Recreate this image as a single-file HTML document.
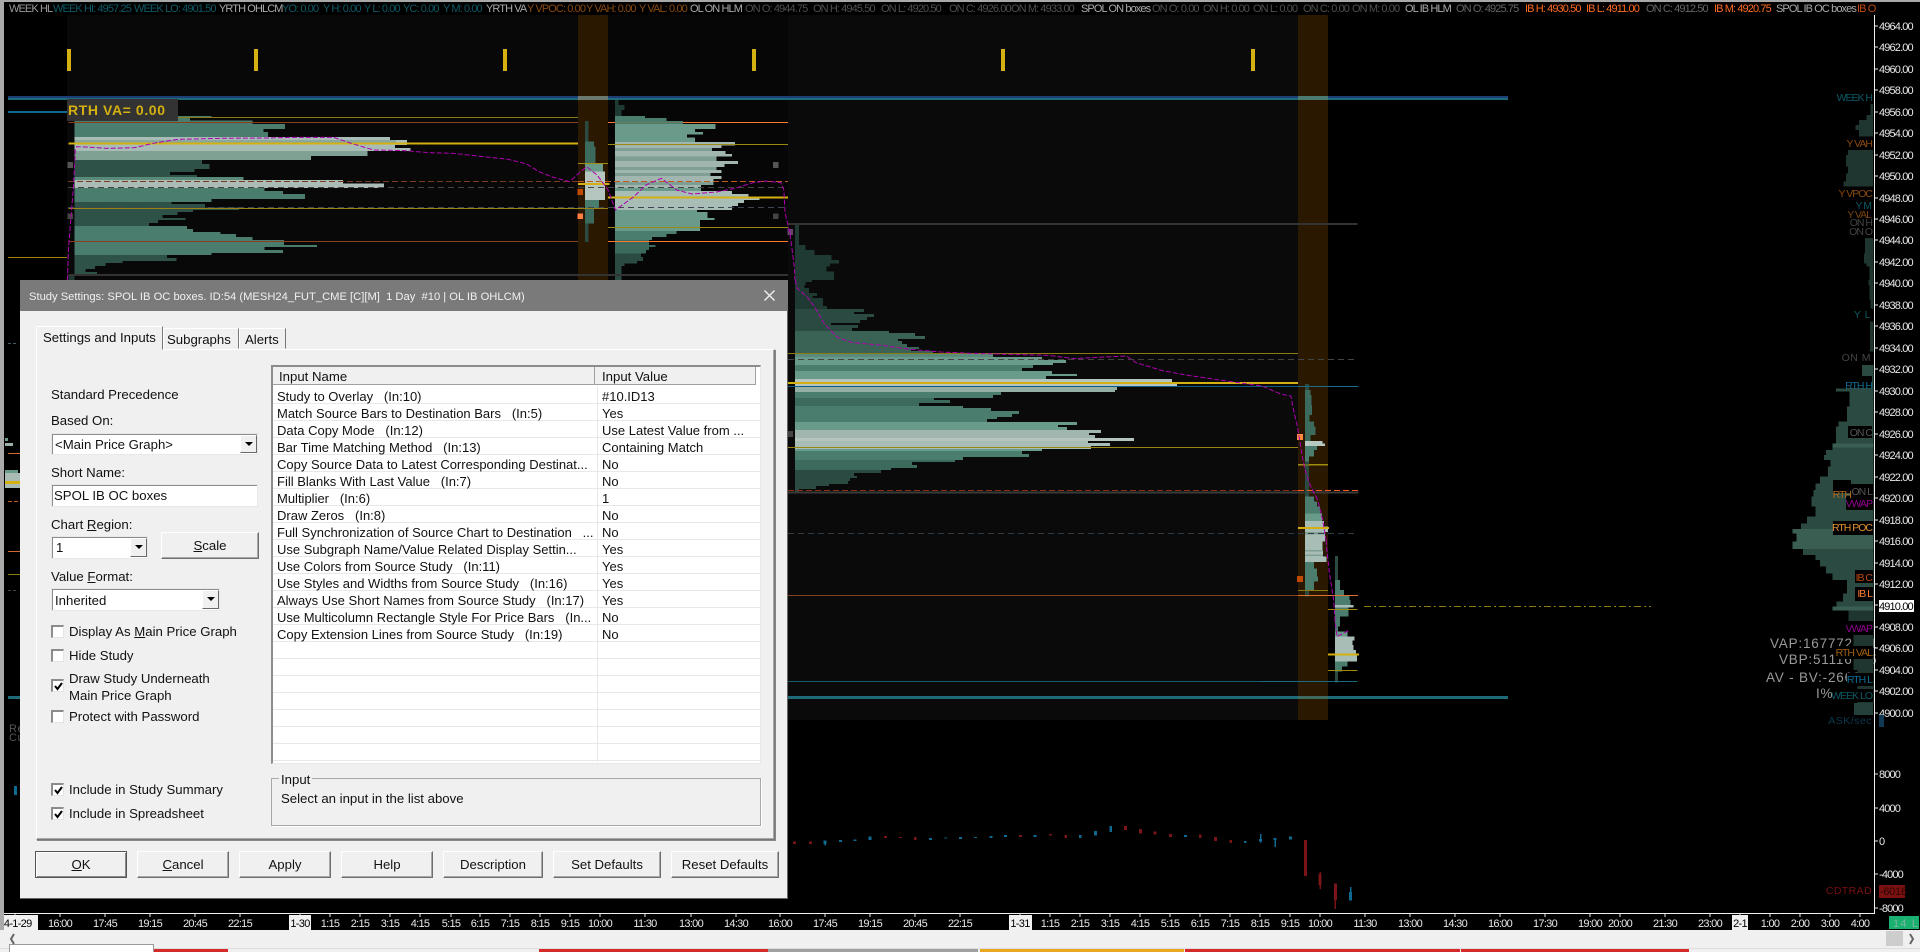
<!DOCTYPE html>
<html><head><meta charset="utf-8"><title>Study Settings</title>
<style>
html,body{margin:0;padding:0;background:#000;width:1920px;height:952px;overflow:hidden}
body{position:relative;font-family:"Liberation Sans",Arial,sans-serif;color:#111}
svg{position:absolute;left:0;top:0}
svg text{font-family:"Liberation Sans",Arial,sans-serif;font-size:11px;letter-spacing:-.5px}
.cr{shape-rendering:crispEdges}
.ax text{fill:#e8e8e8;letter-spacing:-.85px}
.tl text{fill:#e8e8e8;text-anchor:middle;letter-spacing:-.7px}
.lb text{text-anchor:end;font-size:10.5px;letter-spacing:-1px}
.hd text{letter-spacing:-.9px}
.a{position:absolute}
#dlg{position:absolute;left:20px;top:280px;width:768px;height:619px;background:#f0f0f0;box-shadow:inset -1px -1px #666}
.x{position:absolute;font-size:13.2px;line-height:16px;white-space:pre;color:#111;margin-top:1px}
.sunk{position:absolute;background:#fff;box-sizing:border-box;border-top:2px solid #8c8c8c;border-left:2px solid #8c8c8c;border-right:1px solid #fff;border-bottom:1px solid #fff;outline:1px solid #e8e8e8;outline-offset:-1px}
.dd{position:absolute;background:#f0f0f0;box-sizing:border-box;width:17px;border:1px solid;border-color:#fff #696969 #696969 #fff}
.dd:after{content:"";position:absolute;left:4px;top:6px;border:4px solid transparent;border-top:4px solid #000;border-bottom:0}
.btn{position:absolute;box-sizing:border-box;height:27px;top:851px;background:#f0f0f0;border:1px solid;border-color:#fff #6e6e6e #6e6e6e #fff;box-shadow:inset -1px -1px #a8a8a8;text-align:center;font-size:13.2px;line-height:25px;color:#111}
.ck{position:absolute;left:51px;width:13px;height:13px;box-sizing:border-box;background:#fff;border-top:2px solid #8c8c8c;border-left:2px solid #8c8c8c;border-right:1px solid #e4e4e4;border-bottom:1px solid #e4e4e4}
.ck svg{left:-1px;top:-1px}
u{text-decoration:underline}
</style></head>
<body>
<!-- chart -->
<svg width="1920" height="952" viewBox="0 0 1920 952">
<!-- backgrounds -->
<g class="cr">
<rect x="0" y="0" width="1920" height="952" fill="#000"/>
<rect x="67" y="15" width="511" height="705" fill="#080808"/>
<rect x="608" y="15" width="180" height="705" fill="#060606"/>
<rect x="788" y="15" width="510" height="705" fill="#0a0a0a"/>
<rect x="578" y="15" width="30" height="705" fill="#2a1800"/>
<rect x="1298" y="15" width="30" height="705" fill="#2a1800"/>
<!-- ticks -->
<g fill="#d4b010"><rect x="67" y="49" width="4" height="22"/><rect x="254" y="49" width="4" height="22"/><rect x="503" y="49" width="4" height="22"/><rect x="752" y="49" width="4" height="22"/><rect x="1001" y="49" width="4" height="22"/><rect x="1251" y="49" width="4" height="22"/></g>

<!-- zoom1 coordinate system -->
<g transform="scale(.6124,.3333)">
<path fill="#4a7d6e" d="M122 348H345V354H310V362H412V372H465V387H430V396H438V411H122z"/>
<path fill="#a8bdb5" d="M122 411H637V420H665V435H645V444H670V453H122z"/>
<rect x="122" y="420" width="525" height="9" fill="#8aa89e"/>
<path fill="#7fa194" d="M122 453H600V468H508V480H122z"/>
<path fill="#2f5248" d="M122 480H330V492H342V507H318V516H278V525H322V531H122z"/>
<path fill="#5a8a7a" d="M122 531H398V540H122z"/>
<path fill="#aabcb5" d="M122 540H560V550H627V564H122z"/>
<path fill="#4a7d6e" d="M122 564H432V573H462V582H498V597H345V606H122z"/>
<path fill="#2f5248" d="M122 606H280V612H335V622H390V630H315V636H290V645H265V654H303V660H258V669H243V678H122z"/>
<path fill="#4a7d6e" d="M122 678H305V687H315V696H360V702H385V711H412V720H464V735H518V741H432V750H462V759H345V765H122z"/>
<path fill="#2f5248" d="M122 765H273V774H288V783H200V789H172V798H155V807H140V816H158V825H122z"/>
<rect x="122" y="291" width="14" height="57" fill="#1f3a33"/>
<rect x="112" y="825" width="10" height="15" fill="#1f3a33"/>
<!-- band profile -->
<rect x="955" y="363" width="6" height="363" fill="#2a4a42"/>
<path fill="#3c6a5c" d="M955 425H970V440H972V490H955z"/>
<path fill="#6a9a8a" d="M955 490H985V515H955z"/>
<path fill="#b5c5bf" d="M955 515H988V600H955z"/>
<path fill="#4a7d6e" d="M955 600H978V625H955z"/>
<path fill="#3c6a5c" d="M955 625H970V670H955z"/>
<!-- profile 2 -->
<path fill="#1f3a33" d="M1004 292H1010V315H1020V330H1015V348H1004z"/>
<path fill="#4a7d6e" d="M1004 348H1053V354H1088V363H1115V372H1004z"/>
<path fill="#6a9a8a" d="M1004 372H1168V387H1135V396H1148V403H1122V412H1135V426H1004z"/>
<path fill="#a0b6ae" d="M1004 426H1200V436H1178V444H1163V453H1185V462H1195V470H1170V483H1205V492H1183V501H1170V510H1178V519H1160V528H1178V537H1165V555H1145V564H1004z"/>
<g fill="#7f9f94"><rect x="1004" y="444" width="159" height="9"/><rect x="1004" y="470" width="166" height="13"/><rect x="1004" y="501" width="166" height="9"/><rect x="1004" y="519" width="156" height="9"/><rect x="1004" y="546" width="161" height="9"/></g>
<path fill="#6a9a8a" d="M1004 564H1145V573H1004z"/>
<path fill="#a8bdb5" d="M1004 573H1195V582H1222V591H1240V600H1215V609H1205V618H1195V630H1004z"/>
<path fill="#6a9a8a" d="M1004 630H1138V636H1155V654H1167V660H1143V693H1004z"/>
<path fill="#4a7d6e" d="M1004 693H1105V702H1088V711H1065V720H1004z"/>
<path fill="#3c6a5c" d="M1004 720H1060V735H1070V741H1060V750H1055V760H1004z"/>
<path fill="#2a4a42" d="M1004 760H1047V771H1050V783H1040V790H1020V798H1015V840H1004z"/>
<!-- profile 3 top -->
<path fill="#1f3a33" d="M1298 672H1305V735H1315V750H1330V765H1358V780H1370V790H1355V800H1350V815H1362V840H1298z"/>
<!-- horizontal lines -->
<rect x="290" y="351" width="654" height="3" fill="#8a7a10"/>
<rect x="112" y="366" width="832" height="3" fill="#8a4020"/>
<rect x="993" y="366" width="294" height="3" fill="#ff7a30"/>
<rect x="1004" y="366" width="111" height="3" fill="#6a7a60"/>
<rect x="112" y="428" width="832" height="6" fill="#d4b010"/>
<rect x="993" y="432" width="294" height="3" fill="#9a8a14"/>
<rect x="944" y="489" width="49" height="3" fill="#a08c10"/>
<rect x="944" y="549" width="51" height="6" fill="#d4b010"/>
<rect x="993" y="590" width="294" height="6" fill="#d4b010"/>
<rect x="112" y="624" width="881" height="3" fill="#9a8414"/>
<rect x="993" y="681" width="294" height="3" fill="#9a8a14"/>
<rect x="112" y="723" width="832" height="3" fill="#8a4020"/>
<rect x="993" y="723" width="294" height="3" fill="#ff7a30"/>
<rect x="112" y="822" width="1175" height="6" fill="#333"/>
<rect x="1287" y="669" width="930" height="6" fill="#333"/>
<!-- small squares -->
<rect x="110" y="486" width="9" height="18" fill="#555"/><rect x="110" y="640" width="9" height="17" fill="#444"/>
<rect x="1262" y="486" width="9" height="18" fill="#555"/><rect x="1262" y="640" width="9" height="17" fill="#444"/>
<rect x="1286" y="687" width="9" height="18" fill="#6a406a"/>
<rect x="943" y="567" width="9" height="18" fill="#c04a00"/><rect x="943" y="640" width="9" height="17" fill="#ff8040"/>
</g>

<!-- zoom6 coordinate system -->
<g transform="translate(780,280) scale(.3827,.3333)">
<path fill="#1f3a33" d="M39 0H84V6H66V15H64V24H76V39H97V48H85V54H112V78H123V87H39z"/>
<path fill="#2a4a42" d="M39 87H220V96H193V102H246V111H227V120H209V129H133V135H204V144H188V153H39z"/>
<path fill="#3a6356" d="M39 153H285V159H353V168H379V177H308V183H319V192H332V201H363V207H342V213H400V219H39z"/>
<path fill="#5a8a7a" d="M39 219H557V231H39z"/>
<path fill="#6a9a8a" d="M39 231H685V240H747V249H713V255H39z"/>
<path fill="#4a7d6e" d="M39 255H661V264H632V273H39z"/>
<path fill="#6a9a8a" d="M39 273H711V282H776V288H695V297H39z"/>
<path fill="#b5c5bf" d="M39 297H1024V306H1130V312H1037V321H39z"/>
<path fill="#95aea6" d="M39 321H881V330H875V336H39z"/>
<path fill="#4a7d6e" d="M39 336H578V345H557V354H39z"/>
<path fill="#3c6a5c" d="M39 354H402V360H444V369H363V378H39z"/>
<path fill="#4a7d6e" d="M39 378H478V384H551V393H625V402H606V411H567V417H541V426H39z"/>
<path fill="#6a9a8a" d="M39 426H776V435H727V441H750V450H39z"/>
<path fill="#a0b6ae" d="M39 450H839V459H808V465H823V474H39z"/>
<path fill="#b5c5bf" d="M39 474H925V483H39z"/>
<path fill="#a8bdb5" d="M39 483H805V489H862V498H813V507H39z"/>
<path fill="#6a9a8a" d="M39 507H685V513H39z"/>
<path fill="#4a7d6e" d="M39 513H632V522H651V531H478V540H39z"/>
<path fill="#3c6a5c" d="M39 540H457V546H345V555H358V564H290V570H39z"/>
<path fill="#2a4a42" d="M39 570H264V579H193V588H201V594H183V603H178V612H128V618H94V627H50V636H39z"/>
<!-- lines -->
<rect x="21" y="219" width="1333" height="3" fill="#8a7a10"/>
<rect x="21" y="306" width="1333" height="6" fill="#d4b010"/>
<rect x="21" y="318" width="1490" height="3" fill="#0e5a7a"/>
<rect x="21" y="501" width="1333" height="3" fill="#9a8414"/>
<rect x="1354" y="552" width="78" height="3" fill="#a08c10"/>
<rect x="21" y="635" width="1490" height="6" fill="#3a3a3a"/>
<rect x="1354" y="741" width="81" height="6" fill="#d4b010"/>
<rect x="21" y="453" width="13" height="18" fill="#444"/>
<rect x="1351" y="462" width="16" height="18" fill="#ff8a40"/>
</g>

<!-- zoom7 coordinate system -->
<g transform="translate(1260,360) scale(.4209,.3333)">
<rect x="107" y="72" width="9" height="638" fill="#2a4a42"/>
<path fill="#3c6a5c" d="M107 90H120V105H122V135H124V165H118V185H128V200H132V225H120V243H107z"/>
<path fill="#b8c8c2" d="M107 243H148V250H154V258H107z"/>
<path fill="#4a7d6e" d="M107 258H135V270H128V290H117V305H107z"/>
<path fill="#4a7d6e" d="M107 410H128V425H135V440H143V460H107z"/>
<path fill="#6a9a8a" d="M107 460H147V483H107z"/>
<path fill="#a8bdb5" d="M107 483H152V500H162V516H155V545H148V570H150V590H158V606H107z"/>
<g fill="#7f9f94"><rect x="107" y="516" width="48" height="8"/><rect x="107" y="570" width="43" height="5"/><rect x="107" y="583" width="43" height="5"/></g>
<path fill="#4a7d6e" d="M107 606H128V625H135V650H138V665H128V690H107z"/>
<rect x="178" y="588" width="7" height="380" fill="#2a4a42"/>
<path fill="#4a7d6e" d="M178 660H190V690H200V705H213V720H215V735H178z"/>
<path fill="#a8bdb5" d="M178 735H222V742H178z"/>
<path fill="#4a7d6e" d="M178 742H210V770H190V800H185V815H178z"/>
<path fill="#6a9a8a" d="M178 815H208V830H178z"/>
<path fill="#a8bdb5" d="M178 830H225V842H220V855H222V870H228V885H230V905H178z"/>
<path fill="#4a7d6e" d="M178 905H208V920H195V935H178z"/>
<rect x="0" y="261" width="90" height="3" fill="#9a8414"/>
<rect x="90" y="78" width="143" height="3" fill="#1a6a88"/>
<rect x="90" y="313" width="72" height="3" fill="#a08c10"/>
<rect x="90" y="501" width="73" height="6" fill="#d4b010"/>
<rect x="90" y="690" width="72" height="3" fill="#8a7a10"/>
<rect x="0" y="705" width="90" height="3" fill="#8a4020"/>
<rect x="90" y="705" width="143" height="3" fill="#e07030"/>
<rect x="162" y="747" width="70" height="3" fill="#a08c10"/>
<rect x="162" y="880" width="73" height="6" fill="#d4b010"/>
<rect x="162" y="930" width="70" height="3" fill="#a08c10"/>
<rect x="0" y="963" width="232" height="3" fill="#1a6a80"/>
<rect x="88" y="648" width="14" height="18" fill="#c04a00"/>
</g>

<!-- lines that span the middle session -->
<rect x="788" y="595" width="472" height="1" fill="#8a4020"/>
<rect x="788" y="681" width="472" height="1" fill="#155a6c"/>

<!-- week hi/lo lines -->
<rect x="8" y="96" width="1500" height="2" fill="#1c3f78"/>
<rect x="8" y="98" width="1500" height="2" fill="#1f6a78"/>
<rect x="578" y="96" width="30" height="4" fill="#6a7a70"/>
<rect x="1298" y="96" width="30" height="4" fill="#4a7a70"/>
<rect x="788" y="696" width="720" height="3" fill="#1f6a78"/>
<rect x="1298" y="696" width="30" height="3" fill="#3f6a60"/>
<rect x="8" y="111" width="59" height="2" fill="#0e6a8c"/>
<rect x="8" y="257" width="59" height="1" fill="#a08010"/>
</g>

<!-- dashed lines -->
<g fill="none" stroke-width="1">
<path d="M68 181.500H578" stroke="#7a3a20" stroke-dasharray="6 3"/>
<path d="M578 181.500H788" stroke="#c05a20" stroke-dasharray="6 3"/>
<path d="M68 187.500H788" stroke="#444" stroke-dasharray="6 4"/>
<path d="M68 207.500H788" stroke="#3d4650" stroke-dasharray="6 4"/>
<path d="M788 359.500H1358" stroke="#444" stroke-dasharray="6 4"/>
<path d="M788 490.500H1298" stroke="#8a3010" stroke-dasharray="6 3"/>
<path d="M1298 490.500H1358" stroke="#ff5a20" stroke-dasharray="6 3"/>
<path d="M788 533.500H1358" stroke="#2d3b47" stroke-dasharray="6 4"/>
<path d="M1364 606.500H1651" stroke="#8a7a10" stroke-dasharray="7 3 2 3"/>
</g>

<!-- VWAP -->
<g fill="none" stroke="#b000b0" stroke-width="1" stroke-dasharray="5 2">
<polyline vector-effect="non-scaling-stroke" transform="scale(.6124,.3333)" points="110,840 112,740 120,560 123,450 125,440 150,442 175,445 220,443 250,430 290,418 360,415 440,414 480,412 545,412 570,428 610,450 660,452 700,458 740,460 790,470 830,478 860,492 880,515 900,530 930,545 945,520 958,500 975,525 985,550 993,570 1005,630 1035,590 1055,555 1080,535 1105,570 1130,582 1170,576 1200,565 1230,548 1250,543 1275,548 1280,570 1282,640 1290,700 1297,800 1298,840"/>
<polyline vector-effect="non-scaling-stroke" transform="translate(780,280) scale(.3827,.3333)" points="40,0 45,25 70,50 90,80 115,130 150,172 190,188 260,195 340,208 420,216 500,220 600,223 700,226 770,236 830,232 905,228 930,248 1000,272 1060,285 1160,302 1260,318 1310,343 1335,348 1340,380 1352,440 1358,480 1365,530 1372,570 1385,615 1405,660 1418,720 1427,780"/>
<polyline vector-effect="non-scaling-stroke" transform="translate(1260,360) scale(.4209,.3333)" points="157,540 158,560 165,640 175,720 178,780 183,830 213,810"/>
</g>

<!-- RTH VA -->
<rect x="67" y="99" width="111" height="22" fill="#333" class="cr"/>
<text x="68" y="115" style="font-size:14px;font-weight:bold;letter-spacing:.6px" fill="#d4b010">RTH VA= 0.00</text>

<!-- header -->
<g class="hd">
<text x="9" y="12" fill="#999">WEEK HL</text>
<text x="53" y="12" fill="#0d5a66">WEEK HI: 4957.25</text>
<text x="134" y="12" fill="#0d5a66">WEEK LO: 4901.50</text>
<text x="219" y="12" fill="#aaa">YRTH OHLCM</text>
<text x="282" y="12" fill="#0d5a66">YO: 0.00</text>
<text x="323" y="12" fill="#0d5a66">Y H: 0.00</text>
<text x="364" y="12" fill="#0d5a66">Y L: 0.00</text>
<text x="403" y="12" fill="#0d5a66">YC: 0.00</text>
<text x="443" y="12" fill="#0d5a66">Y M: 0.00</text>
<text x="486" y="12" fill="#aaa">YRTH VA</text>
<text x="527" y="12" fill="#8a4a10">Y VPOC: 0.00</text>
<text x="586" y="12" fill="#8a4a10">Y VAH: 0.00</text>
<text x="639" y="12" fill="#8a4a10">Y VAL: 0.00</text>
<text x="690" y="12" fill="#aaa">OL ON HLM</text>
<text x="745" y="12" fill="#505050">ON O: 4944.75</text>
<text x="813" y="12" fill="#505050">ON H: 4945.50</text>
<text x="881" y="12" fill="#505050">ON L: 4920.50</text>
<text x="949" y="12" fill="#505050">ON C: 4926.00</text>
<text x="1011" y="12" fill="#505050">ON M: 4933.00</text>
<text x="1081" y="12" fill="#aaa">SPOL ON boxes</text>
<text x="1152" y="12" fill="#505050">ON O: 0.00</text>
<text x="1203" y="12" fill="#505050">ON H: 0.00</text>
<text x="1253" y="12" fill="#505050">ON L: 0.00</text>
<text x="1303" y="12" fill="#505050">ON C: 0.00</text>
<text x="1352" y="12" fill="#505050">ON M: 0.00</text>
<text x="1405" y="12" fill="#aaa">OL IB HLM</text>
<text x="1456" y="12" fill="#666">ON O: 4925.75</text>
<text x="1525" y="12" fill="#ff6a20">IB H: 4930.50</text>
<text x="1586" y="12" fill="#ff6a20">IB L: 4911.00</text>
<text x="1646" y="12" fill="#666">ON C: 4912.50</text>
<text x="1714" y="12" fill="#ff6a20">IB M: 4920.75</text>
<text x="1776" y="12" fill="#aaa">SPOL IB OC boxes</text>
<text x="1857" y="12" fill="#c04a10">IB O</text>
</g>

<!-- stats under composite -->
<g fill="#9a9a9a">
<text x="1770" y="648" style="font-size:13.500px;letter-spacing:.8px">VAP:167772601</text>
<text x="1779" y="664" style="font-size:13.500px;letter-spacing:.8px">VBP:51116745</text>
<text x="1766" y="682" style="font-size:13.500px;letter-spacing:.8px">AV - BV:-26607</text>
<text x="1816" y="698" style="font-size:13.500px;letter-spacing:.8px">I%</text>
</g>

<!-- composite profile -->
<g class="cr">
<g transform="translate(960,0) scale(.6124,.3333)" fill="#1f3530">
<path d="M1491 312H1487V345H1480V360H1468V375H1462V390H1468V410H1491z"/>
<path d="M1491 450H1450V465H1447V500H1450V520H1447V545H1443V560H1491z"/>
<path d="M1491 600H1450V612H1458V625H1491z"/>
<path d="M1491 714H1478V740H1480V800H1486V840H1491z"/>
</g>
<g transform="translate(1780,240) scale(.3333)" fill="#1f3530">
<path d="M280 0H255V40H252V70H268V120H265V135H268V180H272V205H280z"/>
<path d="M280 245H270V330H268V335H280z"/>
<path d="M280 375H247V390H280z"/>
</g>
<g transform="translate(1260,360) scale(.4209,.3333)">
<path fill="#2a4a42" d="M1457 15H1430V50H1395V85H1368V95H1400V140H1395V185H1375V200H1368V250H1457z"/>
<path fill="#3a5f52" d="M1457 250H1360V262H1457z"/>
<path fill="#2a4a42" d="M1457 262H1360V270H1345V285H1340V300H1355V320H1350V350H1330V370H1320V390H1315V410H1310V440H1320V470H1300V490H1285V507H1457z"/>
<path fill="#3a5f52" d="M1457 507H1265V520H1275V545H1265V567H1457z"/>
<path fill="#2a4a42" d="M1457 567H1290V585H1320V600H1330V620H1345V640H1360V660H1395V700H1385V725H1370V740H1457z"/>
<path fill="#3a5f52" d="M1457 740H1360V752H1457z"/>
<path fill="#1f3530" d="M1457 752H1398V785H1405V820H1410V930H1420V1030H1457z"/>
</g>
<rect x="1854" y="703" width="19" height="12" fill="#24403a"/>
</g>

<!-- labels with black bg -->
<g class="cr" fill="#000">
<rect x="1845" y="91" width="29" height="11"/><rect x="1845" y="137" width="29" height="11"/><rect x="1845" y="188" width="29" height="22"/><rect x="1845" y="214" width="29" height="22"/>
<rect x="1845" y="376" width="27" height="12"/><rect x="1848" y="426" width="24" height="12"/><rect x="1833" y="480" width="18" height="13"/><rect x="1851" y="484" width="22" height="12"/><rect x="1846" y="496" width="27" height="14"/><rect x="1833" y="521" width="40" height="14"/><rect x="1855" y="570" width="18" height="13"/><rect x="1855" y="587" width="18" height="14"/><rect x="1846" y="621" width="27" height="14"/><rect x="1835" y="646" width="38" height="13"/><rect x="1847" y="673" width="26" height="13"/><rect x="1832" y="689" width="41" height="13"/>
</g>
<g class="lb">
<text x="1872" y="101" fill="#0d5a66">WEEK H</text>
<text x="1872" y="147" fill="#8a4a10">Y VAH</text>
<text x="1872" y="197" fill="#8a4a10">Y VPOC</text>
<text x="1871" y="209" fill="#0d5a66">Y M</text>
<text x="1871" y="218" fill="#7a4410">Y VAL</text>
<text x="1872" y="226" fill="#444">ON H</text>
<text x="1872" y="235" fill="#444">ON O</text>
<text x="1871" y="318" fill="#0d5a66" style="letter-spacing:.5px">Y L</text>
<text x="1871" y="361" fill="#444" style="letter-spacing:.5px">ON M</text>
<text x="1872" y="389" fill="#0e6a90">RTH H</text>
<text x="1872" y="436" fill="#555">ON C</text>
<text x="1851" y="498" fill="#b06a20">RTH</text>
<text x="1872" y="495" fill="#555">ON L</text>
<text x="1872" y="507" fill="#900090">VWAP</text>
<text x="1872" y="531" fill="#e09030">RTH POC</text>
<text x="1872" y="581" fill="#c04a10">IB C</text>
<text x="1872" y="597" fill="#ff7a30">IB L</text>
<text x="1872" y="632" fill="#900090">VWAP</text>
<text x="1872" y="656" fill="#a06010">RTH VAL</text>
<text x="1872" y="683" fill="#0e6a90">RTH L</text>
<text x="1872" y="699" fill="#0d5a66">WEEK LO</text>
<text x="1872" y="724" fill="#0d3a50" style="letter-spacing:.5px">ASK/sec</text>
<text x="1872" y="894" fill="#7a1010" style="letter-spacing:.4px">CDTRAD</text>
</g>

<!-- candles -->
<g class="cr" transform="translate(780,780) scale(.727,.3333)">
<g fill="#7a1418">
<rect x="18" y="184" width="4" height="8"/><rect x="40" y="184" width="4" height="8"/><rect x="143" y="168" width="4" height="6"/><rect x="164" y="171" width="4" height="3"/><rect x="184" y="171" width="4" height="9"/><rect x="329" y="165" width="4" height="6"/><rect x="370" y="162" width="4" height="5"/><rect x="391" y="165" width="4" height="9"/><rect x="473" y="138" width="4" height="12"/><rect x="494" y="147" width="4" height="13"/><rect x="514" y="155" width="4" height="9"/><rect x="535" y="162" width="4" height="9"/><rect x="576" y="163" width="4" height="11"/><rect x="597" y="171" width="4" height="12"/><rect x="618" y="180" width="4" height="9"/>
<rect x="721" y="180" width="4" height="108"/><rect x="741" y="282" width="4" height="33"/><rect x="762" y="310" width="4" height="50"/>
<rect x="742" y="276" width="2" height="51"/><rect x="763" y="360" width="2" height="27"/>
</g>
<g fill="#0e6a90">
<rect x="60" y="182" width="4" height="10"/><rect x="61" y="192" width="2" height="4"/><rect x="81" y="180" width="4" height="6"/><rect x="101" y="178" width="4" height="5"/><rect x="122" y="170" width="4" height="10"/><rect x="205" y="174" width="4" height="6"/><rect x="226" y="172" width="4" height="4"/><rect x="246" y="171" width="4" height="6"/><rect x="267" y="171" width="4" height="3"/><rect x="288" y="168" width="4" height="6"/><rect x="308" y="165" width="4" height="6"/><rect x="349" y="165" width="4" height="6"/><rect x="411" y="165" width="4" height="9"/><rect x="432" y="153" width="4" height="14"/><rect x="453" y="138" width="4" height="18"/><rect x="556" y="165" width="4" height="6"/><rect x="638" y="183" width="4" height="6"/><rect x="659" y="177" width="4" height="8"/><rect x="660" y="162" width="2" height="25"/><rect x="679" y="174" width="4" height="6"/><rect x="680" y="180" width="2" height="21"/><rect x="700" y="170" width="4" height="9"/><rect x="783" y="336" width="4" height="26"/><rect x="784" y="321" width="2" height="15"/>
</g>
</g>
<rect class="cr" x="14" y="786" width="3" height="9" fill="#0e6a90"/>

<!-- left edge remnants -->
<g class="cr">
<rect x="8" y="343" width="3" height="1" fill="#4a5a60"/><rect x="13" y="343" width="3" height="1" fill="#4a5a60"/>
<rect x="5" y="438" width="3" height="3" fill="#6a9a8a"/><rect x="5" y="443" width="8" height="3" fill="#9ab0a8"/>
<rect x="8" y="453" width="12" height="1" fill="#d06a30"/>
<rect x="5" y="470" width="13" height="3" fill="#6a9a8a"/><rect x="5" y="473" width="15" height="8" fill="#aabbb4"/><rect x="5" y="481" width="15" height="3" fill="#d4b010"/><rect x="5" y="484" width="15" height="4" fill="#aabbb4"/>
<rect x="8" y="501" width="4" height="1" fill="#c05a20"/><rect x="14" y="501" width="4" height="1" fill="#c05a20"/>
<rect x="8" y="551" width="12" height="1" fill="#d06a30"/>
<rect x="8" y="574" width="12" height="1" fill="#8a7a10"/>
<rect x="8" y="590" width="3" height="1" fill="#444"/><rect x="13" y="590" width="3" height="1" fill="#444"/>
<rect x="8" y="696" width="12" height="3" fill="#1f6a78"/>
</g>
<text x="9" y="732" fill="#555" style="font-size:11px;letter-spacing:.6px">Re</text>
<text x="9" y="741" fill="#555" style="font-size:11px;letter-spacing:.6px">Cu</text>

<!-- price axis -->
<rect class="cr" x="1874" y="15" width="1" height="899" fill="#f0f0f0"/>
<path class="cr" stroke="#e8e8e8" fill="none" d="M1875 26h3M1875 47h3M1875 69h3M1875 90h3M1875 112h3M1875 133h3M1875 155h3M1875 176h3M1875 198h3M1875 219h3M1875 240h3M1875 262h3M1875 283h3M1875 305h3M1875 326h3M1875 348h3M1875 369h3M1875 391h3M1875 412h3M1875 434h3M1875 455h3M1875 477h3M1875 498h3M1875 520h3M1875 541h3M1875 563h3M1875 584h3M1875 605h3M1875 627h3M1875 648h3M1875 670h3M1875 691h3M1875 713h3M1875 774h3M1875 808h3M1875 841h3M1875 874h3M1875 908h3"/>
<g class="ax">
<text x="1879" y="30">4964.00</text><text x="1879" y="51">4962.00</text><text x="1879" y="73">4960.00</text><text x="1879" y="94">4958.00</text><text x="1879" y="116">4956.00</text><text x="1879" y="137">4954.00</text><text x="1879" y="159">4952.00</text><text x="1879" y="180">4950.00</text><text x="1879" y="202">4948.00</text><text x="1879" y="223">4946.00</text><text x="1879" y="244">4944.00</text><text x="1879" y="266">4942.00</text><text x="1879" y="287">4940.00</text><text x="1879" y="309">4938.00</text><text x="1879" y="330">4936.00</text><text x="1879" y="352">4934.00</text><text x="1879" y="373">4932.00</text><text x="1879" y="395">4930.00</text><text x="1879" y="416">4928.00</text><text x="1879" y="438">4926.00</text><text x="1879" y="459">4924.00</text><text x="1879" y="481">4922.00</text><text x="1879" y="502">4920.00</text><text x="1879" y="524">4918.00</text><text x="1879" y="545">4916.00</text><text x="1879" y="567">4914.00</text><text x="1879" y="588">4912.00</text>
<rect x="1879" y="600" width="35" height="12" fill="#fff"/>
<text x="1879" y="610" style="fill:#000">4910.00</text>
<text x="1879" y="631">4908.00</text><text x="1879" y="652">4906.00</text><text x="1879" y="674">4904.00</text><text x="1879" y="695">4902.00</text><text x="1879" y="717">4900.00</text>
<text x="1879" y="778">8000</text><text x="1879" y="812">4000</text><text x="1879" y="845">0</text><text x="1879" y="878">-4000</text><text x="1879" y="912">-8000</text>
</g>
<rect class="cr" x="1879" y="715" width="5" height="12" fill="#0e3a55"/>
<rect class="cr" x="1879" y="885" width="26" height="13" fill="#7a1010"/>
<text x="1880" y="895" fill="#2a0505" style="letter-spacing:-.3px">-6016</text>

<!-- timeline -->
<rect class="cr" x="0" y="913" width="1875" height="1" fill="#f0f0f0"/>
<path class="cr" stroke="#e8e8e8" fill="none" d="M15 914v3M60 914v3M105 914v3M150 914v3M195 914v3M240 914v3M300 914v3M330 914v3M360 914v3M390 914v3M420 914v3M451 914v3M480 914v3M510 914v3M540 914v3M570 914v3M600 914v3M645 914v3M691 914v3M736 914v3M780 914v3M825 914v3M870 914v3M915 914v3M960 914v3M1020 914v3M1050 914v3M1080 914v3M1110 914v3M1140 914v3M1170 914v3M1200 914v3M1230 914v3M1260 914v3M1290 914v3M1320 914v3M1365 914v3M1410 914v3M1455 914v3M1500 914v3M1545 914v3M1590 914v3M1620 914v3M1665 914v3M1710 914v3M1740 914v3M1770 914v3M1800 914v3M1830 914v3M1860 914v3"/>
<rect class="cr" x="0" y="915" width="38" height="15" fill="#f0f0f0"/>
<rect class="cr" x="289" y="915" width="22" height="15" fill="#f0f0f0"/>
<rect class="cr" x="1009" y="915" width="23" height="15" fill="#f0f0f0"/>
<rect class="cr" x="1732" y="915" width="16" height="15" fill="#f0f0f0"/>
<g class="tl">
<text x="15" y="927" style="fill:#000">24-1-29</text><text x="60" y="927">16:00</text><text x="105" y="927">17:45</text><text x="150" y="927">19:15</text><text x="195" y="927">20:45</text><text x="240" y="927">22:15</text>
<text x="300" y="927" style="fill:#000">1-30</text>
<text x="330" y="927">1:15</text><text x="360" y="927">2:15</text><text x="390" y="927">3:15</text><text x="420" y="927">4:15</text><text x="451" y="927">5:15</text><text x="480" y="927">6:15</text><text x="510" y="927">7:15</text><text x="540" y="927">8:15</text><text x="570" y="927">9:15</text><text x="600" y="927">10:00</text><text x="645" y="927">11:30</text><text x="691" y="927">13:00</text><text x="736" y="927">14:30</text><text x="780" y="927">16:00</text><text x="825" y="927">17:45</text><text x="870" y="927">19:15</text><text x="915" y="927">20:45</text><text x="960" y="927">22:15</text>
<text x="1020" y="927" style="fill:#000">1-31</text>
<text x="1050" y="927">1:15</text><text x="1080" y="927">2:15</text><text x="1110" y="927">3:15</text><text x="1140" y="927">4:15</text><text x="1170" y="927">5:15</text><text x="1200" y="927">6:15</text><text x="1230" y="927">7:15</text><text x="1260" y="927">8:15</text><text x="1290" y="927">9:15</text><text x="1320" y="927">10:00</text><text x="1365" y="927">11:30</text><text x="1410" y="927">13:00</text><text x="1455" y="927">14:30</text><text x="1500" y="927">16:00</text><text x="1545" y="927">17:30</text><text x="1590" y="927">19:00</text><text x="1620" y="927">20:00</text><text x="1665" y="927">21:30</text><text x="1710" y="927">23:00</text>
<text x="1740" y="927" style="fill:#000">2-1</text>
<text x="1770" y="927">1:00</text><text x="1800" y="927">2:00</text><text x="1830" y="927">3:00</text><text x="1860" y="927">4:00</text>
</g>
<rect class="cr" x="1889" y="916" width="30" height="13" fill="#1ab070"/>
<text x="1893" y="927" fill="#7ab8a0" style="letter-spacing:1.2px">14 LE</text>

<!-- frame, scrollbar, tabs -->
<g class="cr">
<rect x="0" y="0" width="1920" height="2" fill="#a8a8a8"/>
<rect x="0" y="0" width="4" height="930" fill="#aaa"/>
<rect x="0" y="930" width="1920" height="18" fill="#f0f0f0"/>
<rect x="1000" y="948" width="920" height="1" fill="#ddd"/>
<rect x="0" y="948" width="1000" height="1" fill="#ddd"/>
<rect x="1886" y="931" width="17" height="15" fill="#cdcdcd"/>
<rect x="0" y="949" width="1920" height="3" fill="#f0f0f0"/>
<rect x="154" y="949" width="74" height="3" fill="#d42a2a"/>
<rect x="539" y="949" width="229" height="3" fill="#d42a2a"/>
<rect x="768" y="949" width="210" height="3" fill="#a0a0a0"/>
<rect x="980" y="949" width="204" height="3" fill="#eaa820"/>
<rect x="1185" y="949" width="275" height="3" fill="#d42a2a"/>
<rect x="1461" y="949" width="228" height="3" fill="#d42a2a"/>
<rect x="9" y="944" width="145" height="8" fill="#9a9a9a"/>
<rect x="10" y="945" width="143" height="7" fill="#fff"/>
</g>
<path d="M14 934l-3 5 3 5" fill="none" stroke="#666" stroke-width="2"/>
<path d="M1910 934l3 5-3 5" fill="none" stroke="#666" stroke-width="2"/>
</svg>

<!-- dialog -->
<div id="dlg" style="left:20px"></div>
<div class="a" style="left:20px;top:280px;width:768px;height:31px;background:#7a7a7a"></div>
<div class="x" style="left:29px;top:288px;font-size:11.2px;color:#f0f0f0">Study Settings: SPOL IB OC boxes. ID:54 (MESH24_FUT_CME [C][M]  1 Day  #10 | OL IB OHLCM)</div>
<svg width="14" height="14" style="left:763px;top:289px"><path d="M1.500 1.500L11.500 11.500M11.500 1.500L1.500 11.500" stroke="#f0f0f0" stroke-width="1.400" fill="none"/></svg>

<!-- tabs and page -->
<div class="a" style="left:36px;top:349px;width:739px;height:491px;box-sizing:border-box;border:1px solid;border-color:#fff #777 #777 #fff;box-shadow:inset -1px -1px #a8a8a8,1px 1px 0 #888"></div>
<div class="a" style="left:36px;top:326px;width:127px;height:24px;background:#f0f0f0;box-sizing:border-box;border:1px solid;border-color:#fff #777 #f0f0f0 #fff"></div>
<div class="a" style="left:163px;top:328px;width:76px;height:21px;background:#f0f0f0;box-sizing:border-box;border:1px solid;border-color:#fff #777 transparent #fff"></div>
<div class="a" style="left:239px;top:328px;width:47px;height:21px;background:#f0f0f0;box-sizing:border-box;border:1px solid;border-color:#fff #777 transparent #fff"></div>
<div class="x" style="left:43px;top:329px">Settings and Inputs</div>
<div class="x" style="left:167px;top:331px">Subgraphs</div>
<div class="x" style="left:245px;top:331px">Alerts</div>

<!-- left controls -->
<div class="x" style="left:51px;top:386px">Standard Precedence</div>
<div class="x" style="left:51px;top:412px">Based On:</div>
<div class="sunk" style="left:51px;top:433px;width:207px;height:22px"></div>
<div class="dd" style="left:240px;top:435px;height:18px"></div>
<div class="x" style="left:55px;top:436px">&lt;Main Price Graph&gt;</div>
<div class="x" style="left:51px;top:464px">Short Name:</div>
<div class="sunk" style="left:51px;top:484px;width:207px;height:23px"></div>
<div class="x" style="left:54px;top:487px">SPOL IB OC boxes</div>
<div class="x" style="left:51px;top:516px">Chart <u>R</u>egion:</div>
<div class="sunk" style="left:51px;top:536px;width:97px;height:23px"></div>
<div class="dd" style="left:130px;top:538px;height:19px"></div>
<div class="x" style="left:56px;top:539px">1</div>
<div class="btn" style="left:161px;top:532px;width:98px"><u>S</u>cale</div>
<div class="x" style="left:51px;top:568px">Value <u>F</u>ormat:</div>
<div class="sunk" style="left:51px;top:588px;width:169px;height:23px"></div>
<div class="dd" style="left:202px;top:590px;height:19px"></div>
<div class="x" style="left:55px;top:592px">Inherited</div>

<div class="ck" style="top:625px"></div><div class="x" style="left:69px;top:623px">Display As <u>M</u>ain Price Graph</div>
<div class="ck" style="top:649px"></div><div class="x" style="left:69px;top:647px">Hide Study</div>
<div class="ck" style="top:679px"><svg width="13" height="13"><path d="M3 6l2.500 3L10 3" fill="none" stroke="#000" stroke-width="2"/></svg></div>
<div class="x" style="left:69px;top:669px;line-height:17px">Draw Study Underneath
Main Price Graph</div>
<div class="ck" style="top:710px"></div><div class="x" style="left:69px;top:708px">Protect with Password</div>
<div class="ck" style="top:783px"><svg width="13" height="13"><path d="M3 6l2.500 3L10 3" fill="none" stroke="#000" stroke-width="2"/></svg></div>
<div class="x" style="left:69px;top:781px">Include in Study Summary</div>
<div class="ck" style="top:807px"><svg width="13" height="13"><path d="M3 6l2.500 3L10 3" fill="none" stroke="#000" stroke-width="2"/></svg></div>
<div class="x" style="left:69px;top:805px">Include in Spreadsheet</div>

<!-- input list -->
<div class="a" style="left:271px;top:365px;width:490px;height:399px;box-sizing:border-box;background:#fff;border-top:2px solid #8c8c8c;border-left:2px solid #8c8c8c;border-right:1px solid #e8e8e8;border-bottom:1px solid #e8e8e8"></div>
<div class="a" style="left:273px;top:367px;width:322px;height:18px;box-sizing:border-box;background:#f0f0f0;border-right:1px solid #a0a0a0;border-bottom:1px solid #a0a0a0"></div>
<div class="a" style="left:595px;top:367px;width:161px;height:18px;box-sizing:border-box;background:#f0f0f0;border-right:1px solid #a0a0a0;border-bottom:1px solid #a0a0a0"></div>
<div class="x" style="left:279px;top:368px">Input Name</div>
<div class="x" style="left:602px;top:368px">Input Value</div>
<div class="a" style="left:273px;top:387px;width:487px;height:375px;background:repeating-linear-gradient(to bottom,#fff 0,#fff 16px,#e8e8e8 16px,#e8e8e8 17px)"></div>
<div class="a" style="left:597px;top:387px;width:1px;height:375px;background:#e8e8e8"></div>
<div class="x" style="left:277px;top:387px;line-height:17px;font-size:13px">Study to Overlay   (In:10)
Match Source Bars to Destination Bars   (In:5)
Data Copy Mode   (In:12)
Bar Time Matching Method   (In:13)
Copy Source Data to Latest Corresponding Destinat...
Fill Blanks With Last Value   (In:7)
Multiplier   (In:6)
Draw Zeros   (In:8)
Full Synchronization of Source Chart to Destination   ...
Use Subgraph Name/Value Related Display Settin...
Use Colors from Source Study   (In:11)
Use Styles and Widths from Source Study   (In:16)
Always Use Short Names from Source Study   (In:17)
Use Multicolumn Rectangle Style For Price Bars   (In...
Copy Extension Lines from Source Study   (In:19)</div>
<div class="x" style="left:602px;top:387px;line-height:17px;font-size:13px">#10.ID13
Yes
Use Latest Value from ...
Containing Match
No
No
1
No
No
Yes
Yes
Yes
Yes
No
No</div>

<!-- group -->
<div class="a" style="left:271px;top:778px;width:490px;height:48px;box-sizing:border-box;border:1px solid #a8a8a8;box-shadow:1px 1px 0 #fff"></div>
<div class="x" style="left:279px;top:771px;background:#f0f0f0;padding:0 2px">Input</div>
<div class="x" style="left:281px;top:790px">Select an input in the list above</div>

<!-- buttons -->
<div class="btn" style="left:35px;width:92px;border:1px solid #555;box-shadow:inset 1px 1px #fff,inset -1px -1px #888"><u>O</u>K</div>
<div class="btn" style="left:137px;width:92px"><u>C</u>ancel</div>
<div class="btn" style="left:239px;width:92px">Apply</div>
<div class="btn" style="left:341px;width:92px">Help</div>
<div class="btn" style="left:443px;width:100px">Description</div>
<div class="btn" style="left:553px;width:108px">Set Defaults</div>
<div class="btn" style="left:671px;width:108px">Reset Defaults</div>
</body></html>
